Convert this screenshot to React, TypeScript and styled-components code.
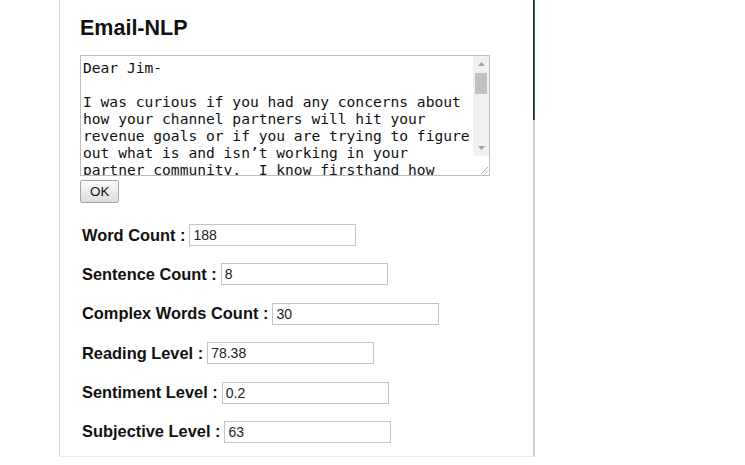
import styled, { createGlobalStyle } from "styled-components";

const emailText = `Dear Jim-

I was curious if you had any concerns about how your channel partners will hit your revenue goals or if you are trying to figure out what is and isn’t working in your partner community.  I know firsthand how difficult it can be to keep partners engaged, trained and selling your products when they have so many other vendors competing for their attention.

Our platform helps companies like yours recruit, onboard and enable partners in one place, so you can see exactly which partners are performing and which ones need more support.  Teams that use it typically see a faster ramp for new partners and a noticeable lift in partner sourced pipeline.

Would you be open to a short call next week to talk through your current program and see if there is a fit?  I would be happy to share a few examples from companies in your space.

Let me know what time works best for you.

Thanks,
Sarah`;

const fields = [
  { label: "Word Count", value: "188" },
  { label: "Sentence Count", value: "8" },
  { label: "Complex Words Count", value: "30" },
  { label: "Reading Level", value: "78.38" },
  { label: "Sentiment Level", value: "0.2" },
  { label: "Subjective Level", value: "63" },
];

function App() {
  return (
    <>
      <GlobalStyle />
      <Panel>
        <Title>Email-NLP</Title>
        <EmailBox>
          <EmailInput defaultValue={emailText} />
          <ScrollBar>
            <ScrollButton>
              <svg width="7" height="4" viewBox="0 0 7 4">
                <polygon points="0,4 3.5,0 7,4" fill="#a3a3a3" />
              </svg>
            </ScrollButton>
            <ScrollTrack>
              <ScrollThumb />
            </ScrollTrack>
            <ScrollButton>
              <svg width="7" height="4" viewBox="0 0 7 4">
                <polygon points="0,0 3.5,4 7,0" fill="#a3a3a3" />
              </svg>
            </ScrollButton>
            <Resizer>
              <svg width="8" height="8" viewBox="0 0 8 8">
                <line x1="1" y1="8" x2="8" y2="1" stroke="#b5b5b5" strokeWidth="1" />
                <line x1="4.5" y1="8" x2="8" y2="4.5" stroke="#b5b5b5" strokeWidth="1" />
              </svg>
            </Resizer>
          </ScrollBar>
        </EmailBox>
        <OkButton>OK</OkButton>
        <Fields>
          {fields.map((f) => (
            <FieldRow key={f.label}>
              <FieldLabel>{f.label} :</FieldLabel>
              <FieldInput defaultValue={f.value} readOnly />
            </FieldRow>
          ))}
        </Fields>
      </Panel>
    </>
  );
}

export default App;

const GlobalStyle = createGlobalStyle`
  body {
    margin: 0;
    background: #fff;
    font-family: "Liberation Sans", Arial, sans-serif;
    color: #111;
  }
`;

const Panel = styled.div`
  position: relative;
  box-sizing: border-box;
  width: 476px;
  margin-left: 59px;
  padding: 16px 20px 13px 20px;
  border-left: 1px solid #d6d6d6;
  border-right: 2px solid #cfcfcf;
  border-bottom: 1px solid #ececec;

  &::after {
    content: "";
    position: absolute;
    top: 0;
    right: -2px;
    width: 2px;
    height: 120px;
    background: linear-gradient(to right, #1c2a22 50%, #2f6a48 50%);
  }
`;

const Title = styled.h1`
  margin: 0 0 14px 0;
  font-size: 21.5px;
  line-height: 25px;
  font-weight: bold;
  color: #111;
`;

const EmailBox = styled.div`
  display: flex;
  box-sizing: border-box;
  width: 410px;
  height: 121px;
  border: 1px solid #bdbdbd;
  background: #fff;
`;

const EmailInput = styled.textarea`
  flex: 1;
  min-width: 0;
  box-sizing: border-box;
  margin: 0;
  padding: 3px 1px 2px 2px;
  border: none;
  outline: none;
  resize: none;
  overflow: hidden;
  font-family: "DejaVu Sans Mono", monospace;
  font-size: 14.6px;
  line-height: 17px;
  color: #111;
  background: transparent;
`;

const ScrollBar = styled.div`
  display: flex;
  flex-direction: column;
  width: 16px;
  background: #f1f1f1;
`;

const ScrollButton = styled.div`
  display: flex;
  align-items: center;
  justify-content: center;
  height: 16px;
`;

const ScrollTrack = styled.div`
  flex: 1;
  padding: 1px 2px;
`;

const ScrollThumb = styled.div`
  height: 21px;
  background: #c1c1c1;
`;

const Resizer = styled.div`
  display: flex;
  align-items: flex-end;
  justify-content: flex-end;
  height: 18px;
  padding: 0 1px 1px 0;
  background: #fff;
`;

const OkButton = styled.button`
  display: block;
  box-sizing: border-box;
  height: 23px;
  margin-top: 4px;
  padding: 0 9px;
  border: 1px solid #a6a6a6;
  border-radius: 2px;
  background: linear-gradient(#fbfbfb, #dcdcdc);
  font-family: "Liberation Sans", Arial, sans-serif;
  font-size: 13.4px;
  color: #111;
`;

const Fields = styled.div`
  display: flex;
  flex-direction: column;
  gap: 17.4px;
  margin-top: 21px;
`;

const FieldRow = styled.div`
  display: flex;
  align-items: center;
  gap: 4px;
  padding-left: 2px;
`;

const FieldLabel = styled.span`
  font-size: 16.4px;
  font-weight: bold;
  color: #111;
  white-space: pre;
`;

const FieldInput = styled.input`
  box-sizing: border-box;
  width: 167px;
  height: 22px;
  margin: 0;
  padding: 0 3px;
  border: 1px solid #c4c4c4;
  font-family: "Liberation Sans", Arial, sans-serif;
  font-size: 14px;
  color: #222;
  background: #fff;
`;
